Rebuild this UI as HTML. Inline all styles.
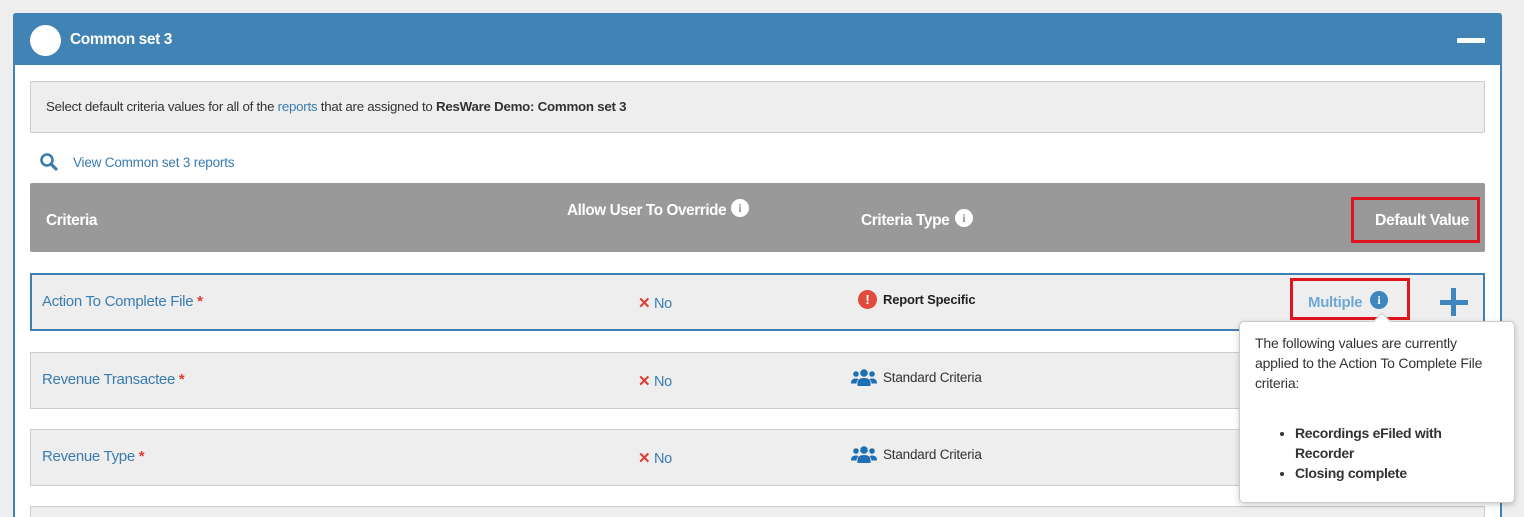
<!DOCTYPE html>
<html><head><meta charset="utf-8"><style>
*{margin:0;padding:0;box-sizing:border-box}
html,body{width:1524px;height:517px;overflow:hidden}
body{background:#eee;position:relative;font-family:"Liberation Sans",sans-serif}
.a{position:absolute}
.panel{left:13px;top:13px;width:1489px;height:504px;background:#fff;border:2px solid #4183b5;border-top:none;border-bottom:none;border-radius:3px 3px 0 0}
.hdr{left:13px;top:13px;width:1489px;height:52px;background:#4183b5;border-radius:3px 3px 0 0}
.row{left:30px;width:1455px;height:57px;background:#eee;border:1px solid #ccc}
.lbl{font-size:15px;color:#3a7cb0;letter-spacing:-0.3px}
.star{color:#e03c31;font-weight:bold}
.no{font-size:14.5px;color:#3a7cb0;letter-spacing:-0.3px}
.no b{color:#e03c31;font-size:15px}
.std{font-size:13.5px;color:#333;letter-spacing:-0.2px}
.wh{color:#fff;font-weight:bold;font-size:15.5px;letter-spacing:-0.4px}
.ic{display:inline-block;width:18px;height:18px;border-radius:50%;background:#fff;color:#999;font-weight:bold;font-size:12px;text-align:center;line-height:18px;font-family:"Liberation Serif",serif}
</style></head><body>
<div class="a panel"></div>
<div class="a hdr"></div>
<div class="a" style="left:30px;top:25px;width:31px;height:31px;border-radius:50%;background:#fff"></div>
<div class="a wh" style="left:70px;top:31px;font-size:15.5px">Common set 3</div>
<div class="a" style="left:1457px;top:38px;width:28px;height:5px;background:#fff;border-radius:1px"></div>

<div class="a" style="left:30px;top:81px;width:1455px;height:52px;background:#eee;border:1px solid #ccc;border-radius:2px"></div>
<div class="a" style="left:46px;top:99px;font-size:13.3px;color:#333;letter-spacing:-0.25px">Select default criteria values for all of the <span style="color:#3a7cb0">reports</span> that are assigned to <b>ResWare Demo: Common set 3</b></div>

<svg class="a" style="left:39px;top:152px" width="20" height="20" viewBox="0 0 20 20"><circle cx="8" cy="8" r="5.5" fill="none" stroke="#3a7cb0" stroke-width="2.6"/><path d="M12 12l5 5" stroke="#3a7cb0" stroke-width="3.2" stroke-linecap="round"/></svg>
<div class="a" style="left:73px;top:155px;font-size:13.5px;color:#3a7cb0;letter-spacing:-0.2px">View Common set 3 reports</div>

<div class="a" style="left:30px;top:183px;width:1455px;height:69px;background:#999;border-radius:2px"></div>
<div class="a wh" style="left:46px;top:212px">Criteria</div>
<div class="a wh" style="left:567px;top:202px;font-size:15.3px">Allow User To Override</div>
<div class="a ic" style="left:731px;top:199px">i</div>
<div class="a wh" style="left:861px;top:212px">Criteria Type</div>
<div class="a ic" style="left:955px;top:209px">i</div>
<div class="a wh" style="left:1375px;top:212px;font-size:15.8px">Default Value</div>
<div class="a" style="left:1351px;top:197px;width:129px;height:46px;border:3px solid #e0141e"></div>

<div class="a row" style="top:273px;height:58px;border:2px solid #3f7fb5"></div>
<div class="a lbl" style="left:42px;top:293px">Action To Complete File <span class="star">*</span></div>
<div class="a no" style="left:638px;top:294px"><b>✕</b> No</div>
<div class="a" style="left:858px;top:290px;width:19px;height:19px;border-radius:50%;background:#e04b3b;color:#fff;font-weight:bold;font-size:13px;text-align:center;line-height:19px">!</div>
<div class="a std" style="left:883px;top:292px;font-weight:bold;color:#222;font-size:13px">Report Specific</div>
<div class="a" style="left:1290px;top:278px;width:120px;height:42px;border:3px solid #e0141e"></div>
<div class="a" style="left:1308px;top:294px;font-size:15px;font-weight:bold;color:#6fa8d4;letter-spacing:-0.3px">Multiple</div>
<div class="a ic" style="left:1370px;top:291px;background:#3d86c0;color:#fff">i</div>
<div class="a" style="left:1451px;top:288px;width:5px;height:28px;background:#3d86c0"></div>
<div class="a" style="left:1440px;top:300px;width:28px;height:5px;background:#3d86c0"></div>

<div class="a row" style="top:352px"></div>
<div class="a lbl" style="left:42px;top:371px">Revenue Transactee <span class="star">*</span></div>
<div class="a no" style="left:638px;top:372px"><b>✕</b> No</div>
<svg class="a" style="left:851px;top:369px" width="26" height="18" viewBox="0 0 26 18"><circle cx="13" cy="4" r="3.8" fill="#1f6fb5"/><circle cx="5" cy="5" r="2.8" fill="#1f6fb5"/><circle cx="21" cy="5" r="2.8" fill="#1f6fb5"/><path d="M6.5 17v-3.5c0-3 3-4.5 6.5-4.5s6.5 1.5 6.5 4.5V17z M0 14c0-3 2-4.5 5-4.5 1 0 2 .3 2.5.7C6 11.5 5.5 13 5.5 14.5H0z M26 14c0-3-2-4.5-5-4.5-1 0-2 .3-2.5.7 1.5 1.3 2 2.8 2 4.3H26z" fill="#1f6fb5"/></svg>
<div class="a std" style="left:883px;top:370px">Standard Criteria</div>

<div class="a row" style="top:429px"></div>
<div class="a lbl" style="left:42px;top:448px">Revenue Type <span class="star">*</span></div>
<div class="a no" style="left:638px;top:449px"><b>✕</b> No</div>
<svg class="a" style="left:851px;top:446px" width="26" height="18" viewBox="0 0 26 18"><circle cx="13" cy="4" r="3.8" fill="#1f6fb5"/><circle cx="5" cy="5" r="2.8" fill="#1f6fb5"/><circle cx="21" cy="5" r="2.8" fill="#1f6fb5"/><path d="M6.5 17v-3.5c0-3 3-4.5 6.5-4.5s6.5 1.5 6.5 4.5V17z M0 14c0-3 2-4.5 5-4.5 1 0 2 .3 2.5.7C6 11.5 5.5 13 5.5 14.5H0z M26 14c0-3-2-4.5-5-4.5-1 0-2 .3-2.5.7 1.5 1.3 2 2.8 2 4.3H26z" fill="#1f6fb5"/></svg>
<div class="a std" style="left:883px;top:447px">Standard Criteria</div>

<div class="a row" style="top:506px;height:11px;border-bottom:none"></div>

<div class="a" style="left:1239px;top:321px;width:276px;height:182px;background:#fff;border:1px solid #ccc;border-radius:5px;box-shadow:0 2px 6px rgba(0,0,0,.2)"></div>
<div class="a" style="left:1376px;top:315px;width:12px;height:12px;background:#fff;border-left:1px solid #ccc;border-top:1px solid #ccc;transform:rotate(45deg)"></div>
<div class="a" style="left:1255px;top:333px;width:245px;font-size:14px;line-height:20px;color:#333;letter-spacing:-0.2px">The following values are currently applied to the Action To Complete File criteria:</div>
<ul class="a" style="left:1295px;top:423px;width:190px;font-size:14px;line-height:20px;color:#333;font-weight:bold;letter-spacing:-0.3px;list-style:disc">
<li>Recordings eFiled with Recorder</li><li>Closing complete</li></ul>
</body></html>
